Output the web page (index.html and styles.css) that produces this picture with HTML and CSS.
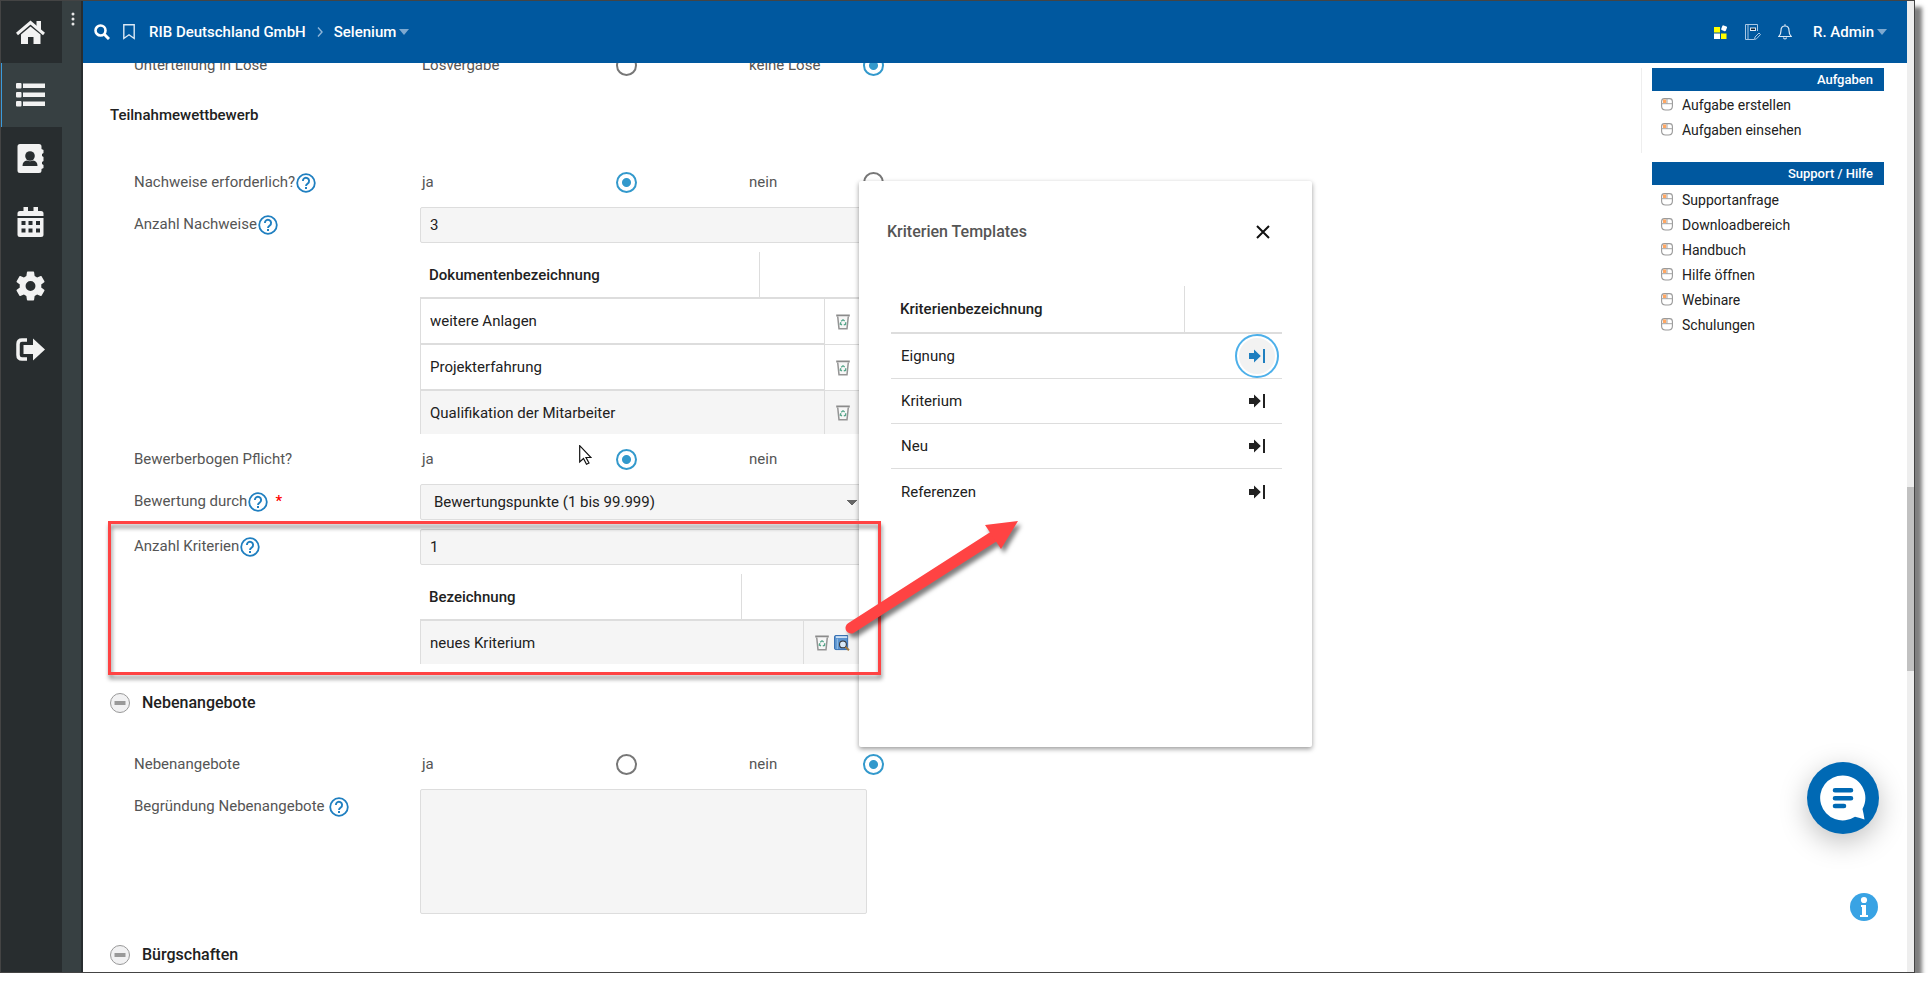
FILE: index.html
```html
<!DOCTYPE html>
<html lang="de">
<head>
<meta charset="utf-8">
<title>RIB Deutschland GmbH – Selenium</title>
<link rel="stylesheet" href="styles.css">
</head>
<body>
<svg class="defs" aria-hidden="true">
  <symbol id="help" viewBox="0 0 20 20"><circle cx="10" cy="10" r="8.8" fill="none" stroke="#1f7fc0" stroke-width="1.8"/><path d="M6.9 8a3.1 3.1 0 1 1 4.9 2.4C10.700 11.200 10 11.700 10 12.900" fill="none" stroke="#1f7fc0" stroke-width="1.9"/><rect x="9" y="14" width="2" height="2" fill="#1f7fc0"/></symbol>
  <symbol id="trash" viewBox="0 0 16 16"><path d="M1.200 1.500H14.800" stroke="#8b8b8b" stroke-width="2"/><path d="M2.700 2.500L4 14.700H12L13.300 2.500" fill="#f7f7f7" stroke="#959595" stroke-width="1.500"/><path d="M6.200 7.200L8 5.800 9.700 7M10.700 8.300L10.500 10.500 8.800 10.800M7 10.800L5.300 10 5.800 8.200" fill="none" stroke="#58a78c" stroke-width="1.400"/></symbol>
  <symbol id="book" viewBox="0 0 17 17"><path d="M2 .5H14.500V15.500H2Q.5 15.500.5 14V2Q.5.500 2 .500z" fill="#5b93cf" stroke="#2f69ad"/><path d="M2 2.200H14" stroke="#e8f2fb" stroke-width="1.600"/><path d="M3.500 4V15" stroke="#9cc4ea"/><circle cx="9.500" cy="10" r="3.600" fill="#d8e9f7" stroke="#333" stroke-width="1.100"/><path d="M12.200 12.700L15.900 16.200" stroke="#a2793e" stroke-width="2.200"/></symbol>
  <symbol id="into" viewBox="0 0 18 16"><path d="M1 5H6V1.500L12.800 8 6 14.500V11H1z" fill="currentColor"/><rect x="15" y="1" width="2" height="14" fill="currentColor"/></symbol>
  <symbol id="mouse" viewBox="0 0 12 13"><path d="M3.500 .6H8.500Q11.400 .6 11.400 3.500V8Q11.400 12 7.500 12H4.500Q.6 12 .6 8V3.500Q.6 .6 3.500 .6z" fill="#fff" stroke="#999" stroke-width="1.100"/><rect x="2" y="1.500" width="3.200" height="3.500" fill="#ffa763"/><path d="M.6 5.700H11.400M6 .6V5.700" stroke="#a5a5a5"/></symbol>
  <symbol id="minus" viewBox="0 0 22 22"><circle cx="11" cy="11" r="9.500" fill="#f1f1f2" stroke="#999"/><rect x="5.500" y="9" width="11" height="4" fill="#999"/></symbol>
</svg>

<div class="window">
  <nav class="rail" aria-label="Hauptnavigation">
    <a href="#" class="rail-link" aria-label="Start"><svg viewBox="0 0 32 32"><path d="M2 18L15.500 6.500 29 18" fill="none" stroke="currentColor" stroke-width="3"/><path d="M21.500 5H26V14L21.500 11z" fill="currentColor"/><path d="M6 18.500L15.500 10.500 25.500 18.500V28H18.500V21H13V28H6z" fill="currentColor"/></svg></a>
    <a href="#" class="rail-link active" aria-label="Liste"><svg viewBox="0 0 32 32" fill="currentColor"><rect x="1" y="4" width="5.500" height="5.500" rx="1"/><rect x="1" y="13" width="5.500" height="5.500" rx="1"/><rect x="1" y="22" width="5.500" height="5.500" rx="1"/><rect x="8" y="4.500" width="22" height="4.500"/><rect x="8" y="13.500" width="22" height="4.500"/><rect x="8" y="22.500" width="22" height="4.500"/></svg></a>
    <a href="#" class="rail-link" aria-label="Adressbuch"><svg viewBox="0 0 32 32" fill="currentColor"><path d="M5 1H24Q26.500 1 26.500 3.500V6L28.500 7V10L27 11V13L28.500 14V18L27 19V21L28.500 22V25L26.500 26V27.500Q26.500 30 24 30H5Q2.500 30 2.500 27.500V3.500Q2.500 1 5 1z"/><circle cx="15" cy="13" r="4.800" fill="#282d2f"/><path d="M7.500 23Q7.500 18 12 17.500Q15 19 18 17.500Q22.500 18 22.500 23z" fill="#282d2f"/></svg></a>
    <a href="#" class="rail-link" aria-label="Kalender"><svg viewBox="0 0 32 32" fill="currentColor"><path d="M8.500 0H13V4H18.500V0H23V4H26Q28.500 4 28.500 6.500V9H2.500V6.500Q2.500 4 5 4H8.500z"/><path d="M2.500 11H28.500V27.500Q28.500 30 26 30H5Q2.500 30 2.500 27.500z"/><g fill="#282d2f"><rect x="6.500" y="14" width="4" height="4"/><rect x="13.500" y="14" width="4" height="4"/><rect x="21" y="14" width="4" height="4"/><rect x="6.500" y="21.500" width="4" height="4"/><rect x="13.500" y="21.500" width="4" height="4"/><rect x="21" y="21.500" width="4" height="4"/></g></svg></a>
    <a href="#" class="rail-link" aria-label="Einstellungen"><svg viewBox="1.660 2 21.330 21.330"><path fill="currentColor" d="M19.140 12.940c.04-.3.06-.61.06-.94 0-.32-.02-.64-.07-.94l2.030-1.580c.18-.14.23-.41.12-.61l-1.920-3.320c-.12-.22-.37-.29-.59-.22l-2.390.96c-.5-.38-1.030-.7-1.620-.94L14.400 2.810c-.04-.24-.24-.41-.48-.41h-3.840c-.24 0-.43.17-.47.41L9.250 5.350C8.660 5.590 8.120 5.920 7.630 6.290L5.240 5.330c-.22-.08-.47 0-.59.22L2.740 8.870c-.12.21-.08.47.12.61l2.030 1.580c-.05.3-.09.63-.09.94s.02.64.07.94l-2.030 1.580c-.18.14-.23.41-.12.61l1.920 3.320c.12.22.37.29.59.22l2.390-.96c.5.38 1.030.7 1.620.94l.36 2.540c.05.24.24.41.48.41h3.840c.24 0 .44-.17.47-.41l.36-2.540c.59-.24 1.130-.56 1.620-.94l2.390.96c.22.08.47 0 .59-.22l1.920-3.320c.12-.22.07-.47-.12-.61zM12 15.300A3.300 3.300 0 1 1 12 8.700a3.300 3.300 0 0 1 0 6.600z"/></svg></a>
    <a href="#" class="rail-link" aria-label="Abmelden"><svg viewBox="0 1 32 32"><path d="M12 6H7Q3 6 3 10V21Q3 25 7 25H12" fill="none" stroke="currentColor" stroke-width="3.500"/><path d="M8.500 11H18V4.500L30 15.500 18 26.500V20H8.500z" fill="currentColor"/></svg></a>
  </nav>
  <div class="subrail"><button class="more" aria-label="Menü"><svg viewBox="0 0 4 14" fill="#e8e8e8"><circle cx="2" cy="2" r="1.500"/><circle cx="2" cy="7" r="1.500"/><circle cx="2" cy="12" r="1.500"/></svg></button></div>

  <div class="page">
    <header class="topbar">
      <button class="icon-btn" aria-label="Suche"><svg width="16" height="16" viewBox="0 0 16 16"><circle cx="6.500" cy="6.500" r="5" fill="none" stroke="#fff" stroke-width="2.600"/><path d="M10.500 10.500L15 15" stroke="#fff" stroke-width="3"/></svg></button>
      <button class="icon-btn mark" aria-label="Lesezeichen"><svg width="12" height="16" viewBox="0 0 12 16"><path d="M.8.800H11.200V14.500L6 10.800.8 14.500z" fill="none" stroke="#dce9f5" stroke-width="1.400"/></svg></button>
      <a href="#" class="crumb">RIB Deutschland GmbH</a>
      <svg class="chev" width="6" height="10" viewBox="0 0 6 10"><path d="M1 .5L5 5 1 9.500" fill="none" stroke="#8fb6d9" stroke-width="1.400"/></svg>
      <button class="crumb menu">Selenium<i class="caret"></i></button>
      <span class="grow"></span>
      <button class="icon-btn" aria-label="Apps"><svg width="14" height="14" viewBox="0 0 14 14"><rect x="0" y="2" width="6" height="5.500" fill="#ff0"/><rect x="0" y="8.500" width="6" height="5.500" fill="#fff"/><rect x="7" y="8.500" width="5.500" height="5.500" fill="#ff0"/><rect x="7.700" y=".7" width="5" height="5" rx="1" fill="#fff" transform="rotate(22 10 3)"/></svg></button>
      <button class="icon-btn" aria-label="Notizbuch"><svg width="16" height="17" viewBox="0 0 16 17" fill="none" stroke="#a9c8e4"><path d="M9 15.500H.5V.500H12.500V7M3 .5V15.500"/><rect x="5.500" y="4" width="5" height="2.500" fill="#123" stroke="#dce9f5"/><path d="M9.500 15.500L10 13 14 9 15.500 10.500 11.500 14.800z"/></svg></button>
      <button class="icon-btn" aria-label="Meldungen"><svg width="14" height="16" viewBox="0 0 14 16" fill="none" stroke="#dce9f5" stroke-width="1.200"><path d="M.8 12.500Q3 10.500 3 6.500Q3 2 7 2Q11 2 11 6.500Q11 10.500 13.200 12.500zM7 2V.3M5.500 13.500Q5.700 15 7 15Q8.300 15 8.500 13.500"/></svg></button>
      <button class="crumb menu">R. Admin<i class="caret"></i></button>
    </header>

    <main class="content">
      <form class="form">
        <div class="row cut"><span class="label">Unterteilung in Lose</span>
          <div class="radios"><label for="l1">Losvergabe</label><input type="radio" name="lose" id="l1"><label for="l2">keine Lose</label><input type="radio" name="lose" id="l2" checked></div></div>
        <h3 class="sub">Teilnahmewettbewerb</h3>
        <div class="row"><span class="label">Nachweise erforderlich?<svg class="q"><use href="#help"/></svg></span>
          <div class="radios"><label for="n1">ja</label><input type="radio" name="nw" id="n1" checked><label for="n2">nein</label><input type="radio" name="nw" id="n2"></div></div>
        <div class="row"><label class="label" for="anz">Anzahl Nachweise<svg class="q"><use href="#help"/></svg></label>
          <div class="stack"><input class="field" id="anz" value="3">
            <table class="grid">
              <colgroup><col class="c340"><col class="c65"><col></colgroup>
              <thead><tr><th>Dokumentenbezeichnung</th><th colspan="2"></th></tr></thead>
              <tbody>
                <tr><td colspan="2"><input aria-label="Dokument 1" value="weitere Anlagen"></td><td><button type="button" aria-label="Löschen"><svg><use href="#trash"/></svg></button></td></tr>
                <tr><td colspan="2"><input aria-label="Dokument 2" value="Projekterfahrung"></td><td><button type="button" aria-label="Löschen"><svg><use href="#trash"/></svg></button></td></tr>
                <tr class="last"><td colspan="2"><input aria-label="Dokument 3" value="Qualifikation der Mitarbeiter"></td><td><button type="button" aria-label="Löschen"><svg><use href="#trash"/></svg></button></td></tr>
              </tbody>
            </table></div></div>
        <div class="row"><span class="label">Bewerberbogen Pflicht?</span>
          <div class="radios"><label for="b1">ja</label><input type="radio" name="bb" id="b1" checked><label for="b2">nein</label><input type="radio" name="bb" id="b2"></div></div>
        <div class="row"><label class="label" for="bew">Bewertung durch<svg class="q"><use href="#help"/></svg><b class="req">*</b></label>
          <select class="field select" id="bew"><option>Bewertungspunkte (1 bis 99.999)</option></select></div>
        <div class="row"><label class="label" for="kri">Anzahl Kriterien<svg class="q"><use href="#help"/></svg></label>
          <div class="stack"><input class="field" id="kri" value="1">
            <table class="grid">
              <colgroup><col class="c322"><col class="c62"><col></colgroup>
              <thead><tr><th>Bezeichnung</th><th colspan="2"></th></tr></thead>
              <tbody><tr class="last"><td colspan="2"><input aria-label="Kriterium 1" value="neues Kriterium"></td><td><button type="button" aria-label="Löschen"><svg><use href="#trash"/></svg></button><button type="button" aria-label="Vorlage suchen"><svg><use href="#book"/></svg></button></td></tr></tbody>
            </table></div></div>
        <h2 class="section"><svg><use href="#minus"/></svg>Nebenangebote</h2>
        <div class="row first"><span class="label">Nebenangebote</span>
          <div class="radios"><label for="a1">ja</label><input type="radio" name="na" id="a1"><label for="a2">nein</label><input type="radio" name="na" id="a2" checked></div></div>
        <div class="row"><label class="label" for="beg">Begründung Nebenangebote<svg class="q far"><use href="#help"/></svg></label>
          <textarea class="field area" id="beg"></textarea></div>
        <h2 class="section"><svg><use href="#minus"/></svg>Bürgschaften</h2>
      </form>

      <aside class="side">
        <section class="tasks"><h4>Aufgaben</h4>
          <a href="#"><svg><use href="#mouse"/></svg>Aufgabe erstellen</a>
          <a href="#"><svg><use href="#mouse"/></svg>Aufgaben einsehen</a></section>
        <section class="support"><h4>Support / Hilfe</h4>
          <a href="#"><svg><use href="#mouse"/></svg>Supportanfrage</a>
          <a href="#"><svg><use href="#mouse"/></svg>Downloadbereich</a>
          <a href="#"><svg><use href="#mouse"/></svg>Handbuch</a>
          <a href="#"><svg><use href="#mouse"/></svg>Hilfe öffnen</a>
          <a href="#"><svg><use href="#mouse"/></svg>Webinare</a>
          <a href="#"><svg><use href="#mouse"/></svg>Schulungen</a></section>
      </aside>

      <div class="dialog" role="dialog" aria-labelledby="dt">
        <div class="dialog-head"><h2 id="dt">Kriterien Templates</h2><button class="close" aria-label="Schließen"><svg width="14" height="14" viewBox="0 0 14 14"><path d="M1 1L13 13M13 1L1 13" stroke="#111" stroke-width="2"/></svg></button></div>
        <table class="picks">
          <colgroup><col class="c294"><col></colgroup>
          <thead><tr><th>Kriterienbezeichnung</th><th></th></tr></thead>
          <tbody>
            <tr><td>Eignung</td><td><button class="focus" aria-label="Übernehmen"><svg><use href="#into"/></svg></button></td></tr>
            <tr><td>Kriterium</td><td><button aria-label="Übernehmen"><svg><use href="#into"/></svg></button></td></tr>
            <tr><td>Neu</td><td><button aria-label="Übernehmen"><svg><use href="#into"/></svg></button></td></tr>
            <tr><td>Referenzen</td><td><button aria-label="Übernehmen"><svg><use href="#into"/></svg></button></td></tr>
          </tbody>
        </table>
      </div>

      <div class="frame"></div>
      <svg class="arrow" viewBox="0 0 190 130"><path d="M11 113L153 22" stroke="#ff4343" stroke-width="11" stroke-linecap="round"/><path d="M145 10L178 6 161 34z" fill="#ff4343"/></svg>
      <svg class="pointer" viewBox="0 0 13 21"><path d="M.7.700V17L4.500 13.500 7.500 19.300 10 18 7 12.500H12z" fill="#fff" stroke="#111" stroke-width="1.200"/></svg>

      <button class="chat" aria-label="Chat"><svg width="46" height="46" viewBox="0 0 46 46"><path d="M23 .5A22.500 22.500 0 1 0 35 41.800Q40 43 44.500 44.500Q43.500 38 42.500 34A22.500 22.500 0 0 0 23 .5z" fill="#fff"/><path d="M15 15.200H31M15 23.200H31M15 31H24" stroke="#0069b4" stroke-width="4.600" stroke-linecap="round"/></svg></button>
      <button class="info" aria-label="Info"><svg width="28" height="28" viewBox="0 0 28 28"><circle cx="14" cy="7" r="3.100" fill="#fff"/><path d="M11 12H16V22H18V24H10V22H12V14H11z" fill="#fff"/></svg></button>
    </main>
  </div>
  <div class="scroll"><div class="thumb"></div></div>
</div>
</body>
</html>
```

FILE: styles.css
```css
* { box-sizing: border-box; }
body { margin: 0; background: #fff; color: #212121; font: 15px/20px Roboto, "Liberation Sans", sans-serif; overflow: hidden; }
.defs { position: absolute; width: 0; height: 0; }
button { border: 0; background: none; padding: 0; font: inherit; color: inherit; display: inline-flex; align-items: center; justify-content: center; }
input, select, textarea { font: inherit; color: inherit; margin: 0; }
a { color: inherit; text-decoration: none; }
h2, h3, h4 { margin: 0; }

.window { display: flex; height: calc(100vh - 15px); margin-right: 15px; border: 1px solid #444; box-shadow: 7px 7px 4px rgba(0, 0, 0, .5); }
.rail { width: 61px; flex: none; background: #282d2f; color: #f2f2f2; }
.rail-link { display: flex; height: 64px; align-items: center; padding-left: 14px; }
.rail-link:first-child { height: 62px; }
.rail-link.active { background: #374042; border-left: 1px solid #3a9bdc; padding-left: 13px; }
.rail-link svg { width: 32px; height: 32px; }
.subrail { width: 21px; flex: none; background: #374042; border-right: 2px solid #282d2f; text-align: center; }
.more { margin-top: 11px; padding-left: 2px; }
.more svg { width: 4px; height: 14px; display: block; }

.page { flex: 1; min-width: 0; display: flex; flex-direction: column; }
.topbar { display: flex; align-items: center; height: 62px; flex: none; padding: 0 20px 0 10px; background: #00589f; color: #fff; }
.icon-btn { width: 18px; height: 24px; margin-right: 14px; }
.icon-btn.mark { width: 12px; margin: 0 14px 0 -2px; }
.crumb { font-size: 15px; font-weight: 500; }
.chev { margin: 0 11px; }
.caret { border: 5px solid transparent; border-top: 6px solid #7ea9d0; border-bottom: 0; margin-left: 3px; }
.grow { flex: 1; }
.topbar .grow ~ .icon-btn { margin-right: 14px; }
.topbar .grow ~ .menu { margin-left: 5px; }

.content { position: relative; flex: 1; min-height: 0; display: flex; overflow: hidden; }
.form { flex: 1; padding-left: 27px; color: #555; }
.row { display: grid; grid-template-columns: 286px minmax(0, 465px); margin: 9px 0 0 24px; align-items: start; }
.row.cut { margin-top: -14px; }
.row.first { margin-top: 33px; }
.label { display: flex; align-items: center; height: 32px; }
label.label { height: 34px; }
.q { width: 20px; height: 20px; margin: 2px 0 0 1px; }
.q.far { margin-left: 4px; }
.req { color: #f00; margin-left: 7px; font-weight: 500; }
.radios { display: grid; grid-template-columns: 194px 133px 114px 20px; align-items: center; height: 32px; padding-left: 2px; }
.radios input { appearance: none; width: 21px; height: 21px; border: 2px solid #777; border-radius: 50%; background: #fff; margin: 0; }
.radios input:checked { border-color: #39c; background: radial-gradient(circle, #39c 4px, #fff 5px); }
.sub { margin-top: 22px; font-size: 15px; line-height: 24px; font-weight: 500; color: #212121; }
.sub + .row { margin-top: 39px; }
.section { display: flex; align-items: center; gap: 11px; height: 24px; margin: 27px 0 0 -1px; font-size: 16px; font-weight: 500; color: #212121; }
.section:last-child { margin-top: 29px; }
.section svg { width: 22px; height: 22px; }
.field { width: 447px; height: 36px; padding: 0 9px; border: 1px solid #ddd; border-radius: 2px; background: #f5f5f5; color: #212121; display: block; outline: 0; }
.area { height: 125px; resize: none; }
.select { appearance: none; padding: 0 13px; background: linear-gradient(to top right, transparent 50%, #666 51%) no-repeat 425px 15px / 6px 6px, linear-gradient(to top left, transparent 50%, #666 51%) no-repeat 431px 15px / 6px 6px, #f5f5f5; }

.grid { width: 447px; margin-top: 9px; border-collapse: separate; border-spacing: 0; table-layout: fixed; color: #212121; }
.c340 { width: 340px; }
.c65 { width: 65px; }
.c322 { width: 322px; }
.c62 { width: 62px; }
.c294 { width: 294px; }
th { text-align: left; font-weight: 500; height: 47px; padding: 0 9px; border-bottom: 2px solid #ddd; }
th:first-child { border-right: 1px solid #ddd; }
.grid td { padding: 0; height: 46px; border-bottom: 1px solid #ddd; vertical-align: middle; }
.grid td:first-child { border-bottom: 2px solid #ddd; }
.grid input { display: block; width: 100%; height: 44px; border: 1px solid #ddd; border-width: 0 1px; padding: 0 9px; background: #fff; outline: 0; }
.grid td:last-child { padding-left: 10px; line-height: 0; }
.grid .last td { height: 43px; border: 0; background: #f5f5f5; }
.grid .last input { height: 43px; background: #f5f5f5; }
.grid button { width: 16px; margin-right: 4px; }
.grid button svg { width: 16px; height: 16px; }

.side { width: 266px; padding: 5px 23px 0 0; font-size: 14px; }
.side section { padding-left: 10px; }
.side .tasks { border-left: 1px solid #eee; min-height: 85px; margin-bottom: 9px; }
.side .support { border-left: 1px solid transparent; }
.side h4 { height: 23px; line-height: 23px; padding-right: 11px; background: #00589f; color: #fff; font-size: 13px; font-weight: 500; text-align: right; margin-bottom: 1px; }
.side .support h4 { margin-bottom: 2px; }
.side a { display: flex; align-items: center; height: 25px; gap: 9px; padding-left: 9px; }
.side svg { width: 12px; height: 13px; }

.dialog { position: absolute; left: 776px; top: 118px; width: 453px; min-height: 566px; background: #fff; border-radius: 2px; box-shadow: 0 2px 5px rgba(0, 0, 0, .4); padding: 36px 30px 0 32px; }
.dialog-head { display: flex; justify-content: space-between; align-items: center; height: 30px; padding-right: 12px; margin-left: -4px; }
.dialog-head h2 { font-size: 16px; font-weight: 500; color: #555; }
.picks { width: 100%; margin-top: 39px; border-collapse: separate; border-spacing: 0; table-layout: fixed; }
.picks th { height: 48px; }
.picks td { height: 45px; padding: 0 10px; border-bottom: 1px solid #ddd; }
.picks tr:last-child td { border-bottom: 0; }
.picks td:last-child { padding: 0 3px 0 0; text-align: right; }
.picks button { width: 44px; height: 44px; border-radius: 50%; vertical-align: top; }
.picks button svg { width: 18px; height: 16px; }
.picks .focus { background: #f2f2f2; border: 2px solid #4db0ea; box-shadow: inset 0 0 0 2px #fff; color: #1f7fc0; }

.frame { position: absolute; left: 25px; top: 458px; width: 773px; height: 154px; border: 3px solid #ff4343; filter: drop-shadow(1px 4px 2px rgba(0, 0, 0, .45)); pointer-events: none; }
.arrow { position: absolute; left: 757px; top: 452px; width: 190px; height: 130px; filter: drop-shadow(3px 4px 2px rgba(0, 0, 0, .5)); pointer-events: none; }
.pointer { position: absolute; left: 496px; top: 382px; width: 13px; height: 21px; }
.chat { position: absolute; right: 28px; bottom: 138px; width: 72px; height: 72px; border-radius: 50%; background: #0069b4; box-shadow: 0 8px 28px rgba(0, 0, 0, .25); }
.info { position: absolute; right: 29px; bottom: 51px; width: 28px; height: 28px; border-radius: 50%; background: #39a3e4; }

.scroll { width: 7px; flex: none; background: #eee; position: relative; }
.thumb { position: absolute; top: 50%; height: 19%; width: 100%; background: #c1c1c1; }
```
